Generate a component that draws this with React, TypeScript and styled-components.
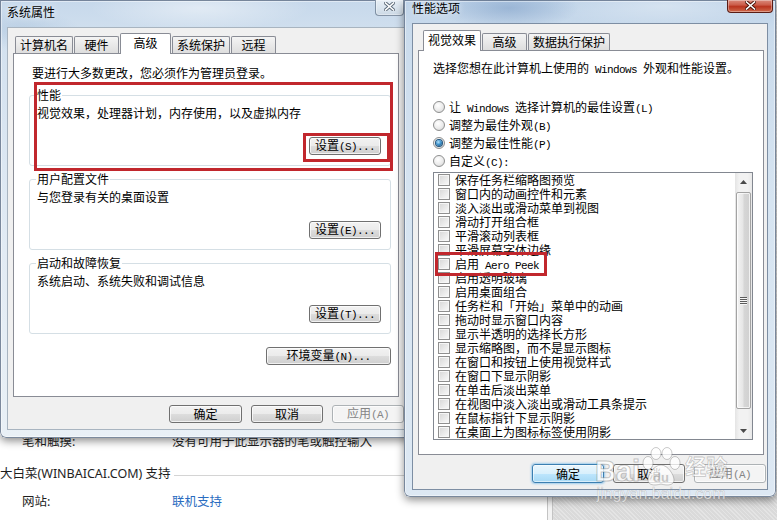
import React from "react";
import styled, { createGlobalStyle } from "styled-components";

const GlobalStyle = createGlobalStyle`
  html, body { margin: 0; padding: 0; }
  body { width: 777px; height: 520px; overflow: hidden; background: #fff; }
  #root { width: 777px; height: 520px; }
`;

const UI = `"Noto Sans CJK SC", "Noto Sans", sans-serif`;

const Desktop = styled.div`
  position: relative;
  width: 777px;
  height: 520px;
  overflow: hidden;
  font-family: ${UI};
  font-size: 12px;
  line-height: 12px;
  color: #000;
`;

/* ---------- background page ---------- */
const Page = styled.div`
  display: flex;
  height: 100%;
`;
const WhitePane = styled.div`
  flex: none;
  width: 547px;
  box-sizing: border-box;
  padding-top: 434px;
  background: #fff;
  font-family: "Noto Sans", "Noto Sans CJK SC", sans-serif;
  font-size: 12.5px;
  color: #1e1e1e;
`;
const Divider = styled.div`
  flex: none;
  width: 4px;
  background: #f3f3f3;
  border-left: 1px solid #c4c4c4;
  border-right: 1px solid #c4c4c4;
`;
const GrayPane = styled.div`
  flex: 1;
  background-color: #dadada;
  background-image: repeating-linear-gradient(45deg, rgba(255, 255, 255, 0.28) 0 1px, transparent 1px 3px);
`;
const InfoRow = styled.div<{ $mt?: number }>`
  display: grid;
  grid-template-columns: 150px 1fr;
  padding-left: 22px;
  height: 16px;
  line-height: 16px;
  margin-top: ${(p) => p.$mt ?? 0}px;
`;
const PageLink = styled.span`
  color: #2a6cc0;
`;
const SectionHead = styled.div`
  display: flex;
  align-items: center;
  gap: 3px;
  height: 16px;
  line-height: 16px;
  margin-top: 16px;
`;
const SectionRule = styled.div`
  flex: 1;
  height: 1px;
  margin-top: 3px;
  background: #d4d4d4;
`;

/* ---------- windows ---------- */
const Window = styled.div<{
  $x: number;
  $y: number;
  $w: number;
  $h: number;
  $pad: string;
  $z: number;
  $active?: boolean;
}>`
  position: absolute;
  left: ${(p) => p.$x}px;
  top: ${(p) => p.$y}px;
  width: ${(p) => p.$w}px;
  height: ${(p) => p.$h}px;
  z-index: ${(p) => p.$z};
  box-sizing: border-box;
  padding: ${(p) => p.$pad};
  display: flex;
  flex-direction: column;
  border-radius: 0 0 6px 6px;
  background: ${(p) =>
    p.$active
      ? `radial-gradient(ellipse 70px 22px at 105px 8px, rgba(110, 145, 190, 0.45), transparent),
         radial-gradient(ellipse 120px 20px at 260px 6px, rgba(255, 255, 255, 0.35), transparent),
         linear-gradient(180deg, #bdd2e8 0px, #cadbec 30px, #d6e4f1 200px, #dde8f3 100%)`
      : `radial-gradient(ellipse 110px 22px at 200px 8px, rgba(255, 255, 255, 0.45), transparent),
         radial-gradient(ellipse 60px 20px at 20px 30px, rgba(150, 180, 210, 0.35), transparent),
         linear-gradient(180deg, #c6d8eb 0px, #d3e1ef 40px, #e2ebf4 250px, #e9f0f6 100%)`};
  box-shadow: inset 0 0 0 1px rgba(45, 65, 95, 0.6), inset 0 0 0 2px rgba(255, 255, 255, 0.45),
    0 3px 9px rgba(0, 0, 0, 0.45);
`;
const TitleBar = styled.div<{ $h: number }>`
  flex: none;
  height: ${(p) => p.$h}px;
  display: flex;
  align-items: flex-start;
`;
const TitleText = styled.span<{ $top: number }>`
  display: block;
  height: 12px;
  margin-top: ${(p) => p.$top}px;
  font-size: 12px;
  line-height: 12px;
  color: #000;
  text-shadow: 0 0 6px rgba(255, 255, 255, 0.9);
`;
const CloseButton = styled.div<{ $w: number; $h: number; $mr: number; $active?: boolean }>`
  margin-left: auto;
  margin-right: ${(p) => p.$mr}px;
  width: ${(p) => p.$w}px;
  height: ${(p) => p.$h}px;
  box-sizing: border-box;
  border: 1px solid ${(p) => (p.$active ? "#5a1c14" : "rgba(80, 100, 125, 0.65)")};
  border-top: none;
  border-radius: 0 0 4px 4px;
  display: flex;
  align-items: flex-end;
  justify-content: center;
  padding-bottom: ${(p) => (p.$active ? 2 : 4)}px;
  background: ${(p) =>
    p.$active
      ? "linear-gradient(180deg, #d98a7c 0%, #cc5e4b 40%, #b9341f 55%, #cf6a4c 100%)"
      : "linear-gradient(180deg, #e8eff6 0%, #d9e4ee 60%, #cbd8e5 100%)"};
  box-shadow: inset 0 0 0 1px rgba(255, 255, 255, 0.35);
`;

const Body = styled.div<{ $pad: string; $active?: boolean }>`
  flex: 1;
  min-height: 0;
  box-sizing: border-box;
  display: flex;
  flex-direction: column;
  padding: ${(p) => p.$pad};
  background: #f0f0f0;
  border: 1px solid ${(p) => (p.$active ? "#7d8ea3" : "rgba(120, 140, 160, 0.6)")};
`;

/* ---------- tabs ---------- */
const TabRow = styled.div<{ $indent: number }>`
  flex: none;
  position: relative;
  z-index: 1;
  height: 20px;
  display: flex;
  align-items: flex-end;
  gap: 1px;
  padding-left: ${(p) => p.$indent}px;
`;
const Tab = styled.div<{ $active?: boolean }>`
  box-sizing: border-box;
  min-width: ${(p) => (p.$active ? 51 : 45)}px;
  height: ${(p) => (p.$active ? 21 : 17)}px;
  margin-bottom: ${(p) => (p.$active ? -1 : 0)}px;
  padding: ${(p) => (p.$active ? "3px 4px 0" : "2px 4px 0")};
  border: 1px solid #898c95;
  border-bottom: none;
  border-radius: 2px 2px 0 0;
  background: ${(p) => (p.$active ? "#fff" : "linear-gradient(180deg, #f4f4f4 0%, #e9e9e9 50%, #dedede 100%)")};
  text-align: center;
  white-space: nowrap;
  line-height: 12px;
`;
const Panel = styled.div<{ $mr: number; $pad: string }>`
  flex: 1;
  min-height: 0;
  box-sizing: border-box;
  display: flex;
  flex-direction: column;
  margin-right: ${(p) => p.$mr}px;
  padding: ${(p) => p.$pad};
  background: #fff;
  border: 1px solid #898c95;
`;
const Intro = styled.div<{ $ml?: number }>`
  margin-left: ${(p) => p.$ml ?? 0}px;
  height: 12px;
  line-height: 12px;
  white-space: nowrap;
`;

/* ---------- group boxes ---------- */
const GroupBox = styled.div<{ $mt: number }>`
  position: relative;
  margin-top: ${(p) => p.$mt}px;
  padding: 11px 9px 10px 7px;
  border: 1px solid #d5dfe5;
  border-radius: 3px;
`;
const GroupTitle = styled.span`
  position: absolute;
  top: -7px;
  left: 6px;
  height: 12px;
  padding: 0 1px;
  background: #fff;
  line-height: 12px;
`;
const GroupText = styled.div`
  height: 12px;
  line-height: 12px;
  white-space: nowrap;
`;

/* ---------- buttons ---------- */
const ButtonRow = styled.div<{ $mt: number; $gap?: number }>`
  flex: none;
  display: flex;
  justify-content: flex-end;
  gap: ${(p) => p.$gap ?? 9}px;
  margin-top: ${(p) => p.$mt}px;
`;
type BtnKind = "normal" | "default" | "disabled";
const Btn = styled.button<{ $w?: number; $h?: number; $kind?: BtnKind }>`
  box-sizing: border-box;
  width: ${(p) => p.$w ?? 72}px;
  height: ${(p) => p.$h ?? 18}px;
  padding: 0;
  margin: 0;
  font-family: ${UI};
  font-size: 12px;
  line-height: 12px;
  white-space: nowrap;
  border-radius: 3px;
  border: 1px solid
    ${(p) => (p.$kind === "default" ? "#3c7fb1" : p.$kind === "disabled" ? "#adb2b5" : "#707070")};
  color: ${(p) => (p.$kind === "disabled" ? "#858585" : "#000")};
  background: ${(p) =>
    p.$kind === "default"
      ? "linear-gradient(180deg, #eaf6fd 0%, #d9f0fc 50%, #bee6fd 50%, #a7d9f5 100%)"
      : p.$kind === "disabled"
      ? "#f4f4f4"
      : "linear-gradient(180deg, #f2f2f2 0%, #ebebeb 50%, #dddddd 50%, #cfcfcf 100%)"};
  box-shadow: ${(p) =>
    p.$kind === "default"
      ? "inset 0 0 0 1px rgba(255,255,255,0.55), 0 0 2px 1px rgba(60,160,230,0.45)"
      : "inset 0 0 0 1px rgba(255,255,255,0.7)"};
`;
const Lat = styled.span`
  font-family: "Liberation Mono", "DejaVu Sans Mono", monospace;
  font-size: 11px;
  letter-spacing: -0.6px;
`;

/* ---------- annotation ---------- */
const Spot = styled.span`
  position: relative;
  display: inline-flex;
`;
const Highlight = styled.span<{ $l: number; $t: number; $w: number; $h: number }>`
  position: absolute;
  z-index: 3;
  left: ${(p) => p.$l}px;
  top: ${(p) => p.$t}px;
  width: ${(p) => p.$w}px;
  height: ${(p) => p.$h}px;
  box-sizing: border-box;
  border: 3px solid #c1272d;
  pointer-events: none;
`;

/* ---------- radios ---------- */
const RadioGroup = styled.div`
  display: flex;
  flex-direction: column;
  margin-top: 24px;
`;
const RadioRow = styled.div`
  height: 18px;
  display: flex;
  align-items: center;
  gap: 4px;
  white-space: nowrap;
`;
const Radio = styled.span<{ $checked?: boolean }>`
  flex: none;
  width: 12px;
  height: 12px;
  box-sizing: border-box;
  border-radius: 50%;
  border: 1px solid #8e8f8f;
  background: radial-gradient(circle at 40% 35%, #ffffff 0%, #ebebeb 55%, #cdcdcd 100%);
  display: flex;
  align-items: center;
  justify-content: center;
  &::after {
    content: "";
    display: ${(p) => (p.$checked ? "block" : "none")};
    width: 6px;
    height: 6px;
    border-radius: 50%;
    background: radial-gradient(circle at 40% 35%, #b6e3fb 0%, #3f95cf 45%, #0e3d66 100%);
    box-shadow: 0 0 0 1px #21557f;
  }
`;
const RowLabel = styled.span`
  display: block;
  height: 12px;
  line-height: 12px;
`;

/* ---------- list box ---------- */
const ListBox = styled.div`
  flex: none;
  margin-top: 2px;
  height: 268px;
  box-sizing: border-box;
  border: 1px solid #828790;
  display: flex;
`;
const ListItems = styled.div`
  flex: 1;
  display: flex;
  flex-direction: column;
`;
const ListItem = styled.div`
  position: relative;
  height: 14px;
  padding-left: 4px;
  display: flex;
  align-items: center;
  gap: 5px;
  white-space: nowrap;
`;
const Check = styled.span`
  flex: none;
  width: 12px;
  height: 12px;
  box-sizing: border-box;
  border: 1px solid #8f8f8f;
  background: linear-gradient(135deg, #d6d6d6 0%, #ececec 60%, #fafafa 100%);
  box-shadow: inset 0 0 0 1px #f6f6f6;
`;
const ScrollBar = styled.div`
  flex: none;
  width: 17px;
  display: flex;
  flex-direction: column;
  background: linear-gradient(90deg, #e4e4e4 0%, #f2f2f2 25%, #f2f2f2 75%, #e8e8e8 100%);
`;
const ScrollArrow = styled.div`
  flex: none;
  height: 17px;
  display: flex;
  align-items: center;
  justify-content: center;
`;
const ScrollTrack = styled.div`
  flex: 1;
  display: flex;
  flex-direction: column;
`;
const Thumb = styled.div`
  flex: none;
  height: 217px;
  margin: 2px 1px 0;
  box-sizing: border-box;
  border: 1px solid #a3a3a3;
  border-radius: 2px;
  background: linear-gradient(90deg, #f4f4f4 0%, #e6e6e6 45%, #d6d6d6 55%, #d0d0d0 100%);
  box-shadow: inset 0 0 0 1px rgba(255, 255, 255, 0.7);
  display: flex;
  align-items: center;
  justify-content: center;
`;

/* ---------- watermark ---------- */
const Watermark = styled.div`
  position: absolute;
  left: 595px;
  top: 449px;
  z-index: 5;
  pointer-events: none;
  display: flex;
  flex-direction: column;
  align-items: center;
  color: rgba(255, 255, 255, 0.78);
`;
const WmTop = styled.div`
  display: flex;
  align-items: center;
  height: 36px;
`;
const WmBai = styled.span`
  font-family: "Liberation Sans", Arial, sans-serif;
  font-weight: 700;
  font-size: 29px;
  line-height: 30px;
  margin-top: 8px;
  -webkit-text-stroke: 1px rgba(100, 100, 100, 0.35);
`;
const WmJing = styled.span`
  font-family: "Noto Sans CJK SC", sans-serif;
  font-weight: 700;
  font-size: 21px;
  line-height: 22px;
  margin-top: -4px;
  margin-left: 3px;
  -webkit-text-stroke: 0.8px rgba(100, 100, 100, 0.35);
`;
const WmUrl = styled.span`
  font-family: "Liberation Sans", Arial, sans-serif;
  font-size: 16px;
  line-height: 16px;
  margin-top: 1px;
  -webkit-text-stroke: 0.6px rgba(100, 100, 100, 0.3);
`;

/* ---------- drawings ---------- */
const CloseGlyph = ({ active }: { active?: boolean }) => (
  <svg width="11" height="9" viewBox="0 0 11 9">
    <path d="M1.5 1 L9.5 8 M9.5 1 L1.5 8" stroke={active ? "#4a1209" : "#5d6b7a"} strokeWidth="3.4" strokeLinecap="square" />
    <path d="M1.5 1 L9.5 8 M9.5 1 L1.5 8" stroke="#fff" strokeWidth="1.6" strokeLinecap="square" />
  </svg>
);
const ArrowGlyph = ({ down }: { down?: boolean }) => (
  <svg width="7" height="4" viewBox="0 0 7 4">
    <path d={down ? "M0 0 L7 0 L3.5 4 Z" : "M0 4 L7 4 L3.5 0 Z"} fill="#4a4a4a" />
  </svg>
);
const Grip = () => (
  <svg width="7" height="8" viewBox="0 0 7 8">
    {[0, 2, 4, 6].map((y) => (
      <g key={y}>
        <rect x="0" y={y} width="7" height="1" fill="#5c5c5c" />
        <rect x="0" y={y + 1} width="7" height="1" fill="#f6f6f6" />
      </g>
    ))}
  </svg>
);
const Paw = () => (
  <svg width="42" height="40" viewBox="0 0 42 40">
    <g fill="rgba(255,255,255,0.78)" stroke="rgba(100,100,100,0.35)" strokeWidth="1">
      <ellipse cx="8" cy="16" rx="5" ry="6.5" />
      <ellipse cx="16" cy="6.5" rx="5" ry="6" />
      <ellipse cx="27" cy="6.5" rx="5" ry="6" />
      <ellipse cx="35" cy="16" rx="5" ry="6.5" />
      <path d="M21 18 C14 18 8 28 8 33 C8 38 14 39 21 37 C28 39 34 38 34 33 C34 28 28 18 21 18 Z" />
    </g>
    <text x="21" y="35" textAnchor="middle" fontFamily="Liberation Sans, Arial, sans-serif" fontWeight="700" fontSize="13" fill="rgba(150,150,150,0.5)">
      du
    </text>
  </svg>
);

/* ---------- data ---------- */
const effects: React.ReactNode[] = [
  "保存任务栏缩略图预览",
  "窗口内的动画控件和元素",
  "淡入淡出或滑动菜单到视图",
  "滑动打开组合框",
  "平滑滚动列表框",
  "平滑屏幕字体边缘",
  <>
    启用<Lat> Aero Peek</Lat>
  </>,
  "启用透明玻璃",
  "启用桌面组合",
  "任务栏和「开始」菜单中的动画",
  "拖动时显示窗口内容",
  "显示半透明的选择长方形",
  "显示缩略图，而不是显示图标",
  "在窗口和按钮上使用视觉样式",
  "在窗口下显示阴影",
  "在单击后淡出菜单",
  "在视图中淡入淡出或滑动工具条提示",
  "在鼠标指针下显示阴影",
  "在桌面上为图标标签使用阴影",
];

const radios: { label: React.ReactNode; checked?: boolean }[] = [
  {
    label: (
      <>
        让<Lat> Windows </Lat>选择计算机的最佳设置<Lat>(L)</Lat>
      </>
    ),
  },
  { label: <>调整为最佳外观<Lat>(B)</Lat></> },
  { label: <>调整为最佳性能<Lat>(P)</Lat></>, checked: true },
  { label: <>自定义<Lat>(C):</Lat></> },
];

export default function App() {
  return (
    <>
      <GlobalStyle />
      <Desktop>
        <Page>
          <WhitePane>
            <InfoRow>
              <span>笔和触摸:</span>
              <span>没有可用于此显示器的笔或触控输入</span>
            </InfoRow>
            <SectionHead>
              <span>大白菜(WINBAICAI.COM) 支持</span>
              <SectionRule />
            </SectionHead>
            <InfoRow $mt={12}>
              <span>网站:</span>
              <PageLink>联机支持</PageLink>
            </InfoRow>
          </WhitePane>
          <Divider />
          <GrayPane />
        </Page>

        {/* 系统属性 */}
        <Window $x={0} $y={0} $w={413} $h={438} $pad="0 7px 8px 7px" $z={1}>
          <TitleBar $h={27}>
            <TitleText $top={6}>系统属性</TitleText>
            <CloseButton $w={29} $h={16} $mr={2}>
              <CloseGlyph />
            </CloseButton>
          </TitleBar>
          <Body $pad="5px 1px 6px 5px">
            <TabRow $indent={2}>
              <Tab>计算机名</Tab>
              <Tab>硬件</Tab>
              <Tab $active>高级</Tab>
              <Tab>系统保护</Tab>
              <Tab>远程</Tab>
            </TabRow>
            <Panel $mr={5} $pad="13px 7px 0 15px">
              <Intro $ml={3}>要进行大多数更改，您必须作为管理员登录。</Intro>
              <GroupBox $mt={16}>
                <GroupTitle>性能</GroupTitle>
                <GroupText>视觉效果，处理器计划，内存使用，以及虚拟内存</GroupText>
                <ButtonRow $mt={18}>
                  <Spot>
                    <Btn>
                      设置<Lat>(S)...</Lat>
                    </Btn>
                    <Highlight $l={-6} $t={-4} $w={87} $h={29} />
                  </Spot>
                </ButtonRow>
                <Highlight $l={4} $t={-14} $w={359} $h={89} />
              </GroupBox>
              <GroupBox $mt={13}>
                <GroupTitle>用户配置文件</GroupTitle>
                <GroupText>与您登录有关的桌面设置</GroupText>
                <ButtonRow $mt={18}>
                  <Btn>
                    设置<Lat>(E)...</Lat>
                  </Btn>
                </ButtonRow>
              </GroupBox>
              <GroupBox $mt={13}>
                <GroupTitle>启动和故障恢复</GroupTitle>
                <GroupText>系统启动、系统失败和调试信息</GroupText>
                <ButtonRow $mt={18}>
                  <Btn>
                    设置<Lat>(T)...</Lat>
                  </Btn>
                </ButtonRow>
              </GroupBox>
              <ButtonRow $mt={13}>
                <Btn $w={125}>
                  环境变量<Lat>(N)...</Lat>
                </Btn>
              </ButtonRow>
            </Panel>
            <ButtonRow $mt={8}>
              <Btn $w={73}>确定</Btn>
              <Btn>取消</Btn>
              <Btn $kind="disabled">
                应用<Lat>(A)</Lat>
              </Btn>
            </ButtonRow>
          </Body>
        </Window>

        {/* 性能选项 */}
        <Window $x={404} $y={0} $w={372} $h={497} $pad="0 8px 7px 8px" $z={2} $active>
          <TitleBar $h={23}>
            <TitleText $top={2}>性能选项</TitleText>
            <CloseButton $w={46} $h={13} $mr={-5} $active>
              <CloseGlyph active />
            </CloseButton>
          </TitleBar>
          <Body $pad="6px 1px 6px 5px" $active>
            <TabRow $indent={5}>
              <Tab $active>视觉效果</Tab>
              <Tab>高级</Tab>
              <Tab>数据执行保护</Tab>
            </TabRow>
            <Panel $mr={2} $pad="11px 10px 0 14px">
              <Intro>
                选择您想在此计算机上使用的<Lat> Windows </Lat>外观和性能设置。
              </Intro>
              <RadioGroup>
                {radios.map((r, i) => (
                  <RadioRow key={i}>
                    <Radio $checked={r.checked} />
                    <RowLabel>{r.label}</RowLabel>
                  </RadioRow>
                ))}
              </RadioGroup>
              <ListBox>
                <ListItems>
                  {effects.map((label, i) => (
                    <ListItem key={i}>
                      <Check />
                      <RowLabel>{label}</RowLabel>
                      {i === 6 && <Highlight $l={1} $t={-5} $w={112} $h={24} />}
                    </ListItem>
                  ))}
                </ListItems>
                <ScrollBar>
                  <ScrollArrow>
                    <ArrowGlyph />
                  </ScrollArrow>
                  <ScrollTrack>
                    <Thumb>
                      <Grip />
                    </Thumb>
                  </ScrollTrack>
                  <ScrollArrow>
                    <ArrowGlyph down />
                  </ScrollArrow>
                </ScrollBar>
              </ListBox>
            </Panel>
            <ButtonRow $mt={9}>
              <Btn $h={19} $kind="default">
                确定
              </Btn>
              <Btn $h={19}>取消</Btn>
              <Btn $h={19} $kind="disabled">
                应用<Lat>(A)</Lat>
              </Btn>
            </ButtonRow>
          </Body>
        </Window>

        <Watermark>
          <WmTop>
            <WmBai>Bai</WmBai>
            <Paw />
            <WmJing>经验</WmJing>
          </WmTop>
          <WmUrl>jingyan.baidu.com</WmUrl>
        </Watermark>
      </Desktop>
    </>
  );
}
